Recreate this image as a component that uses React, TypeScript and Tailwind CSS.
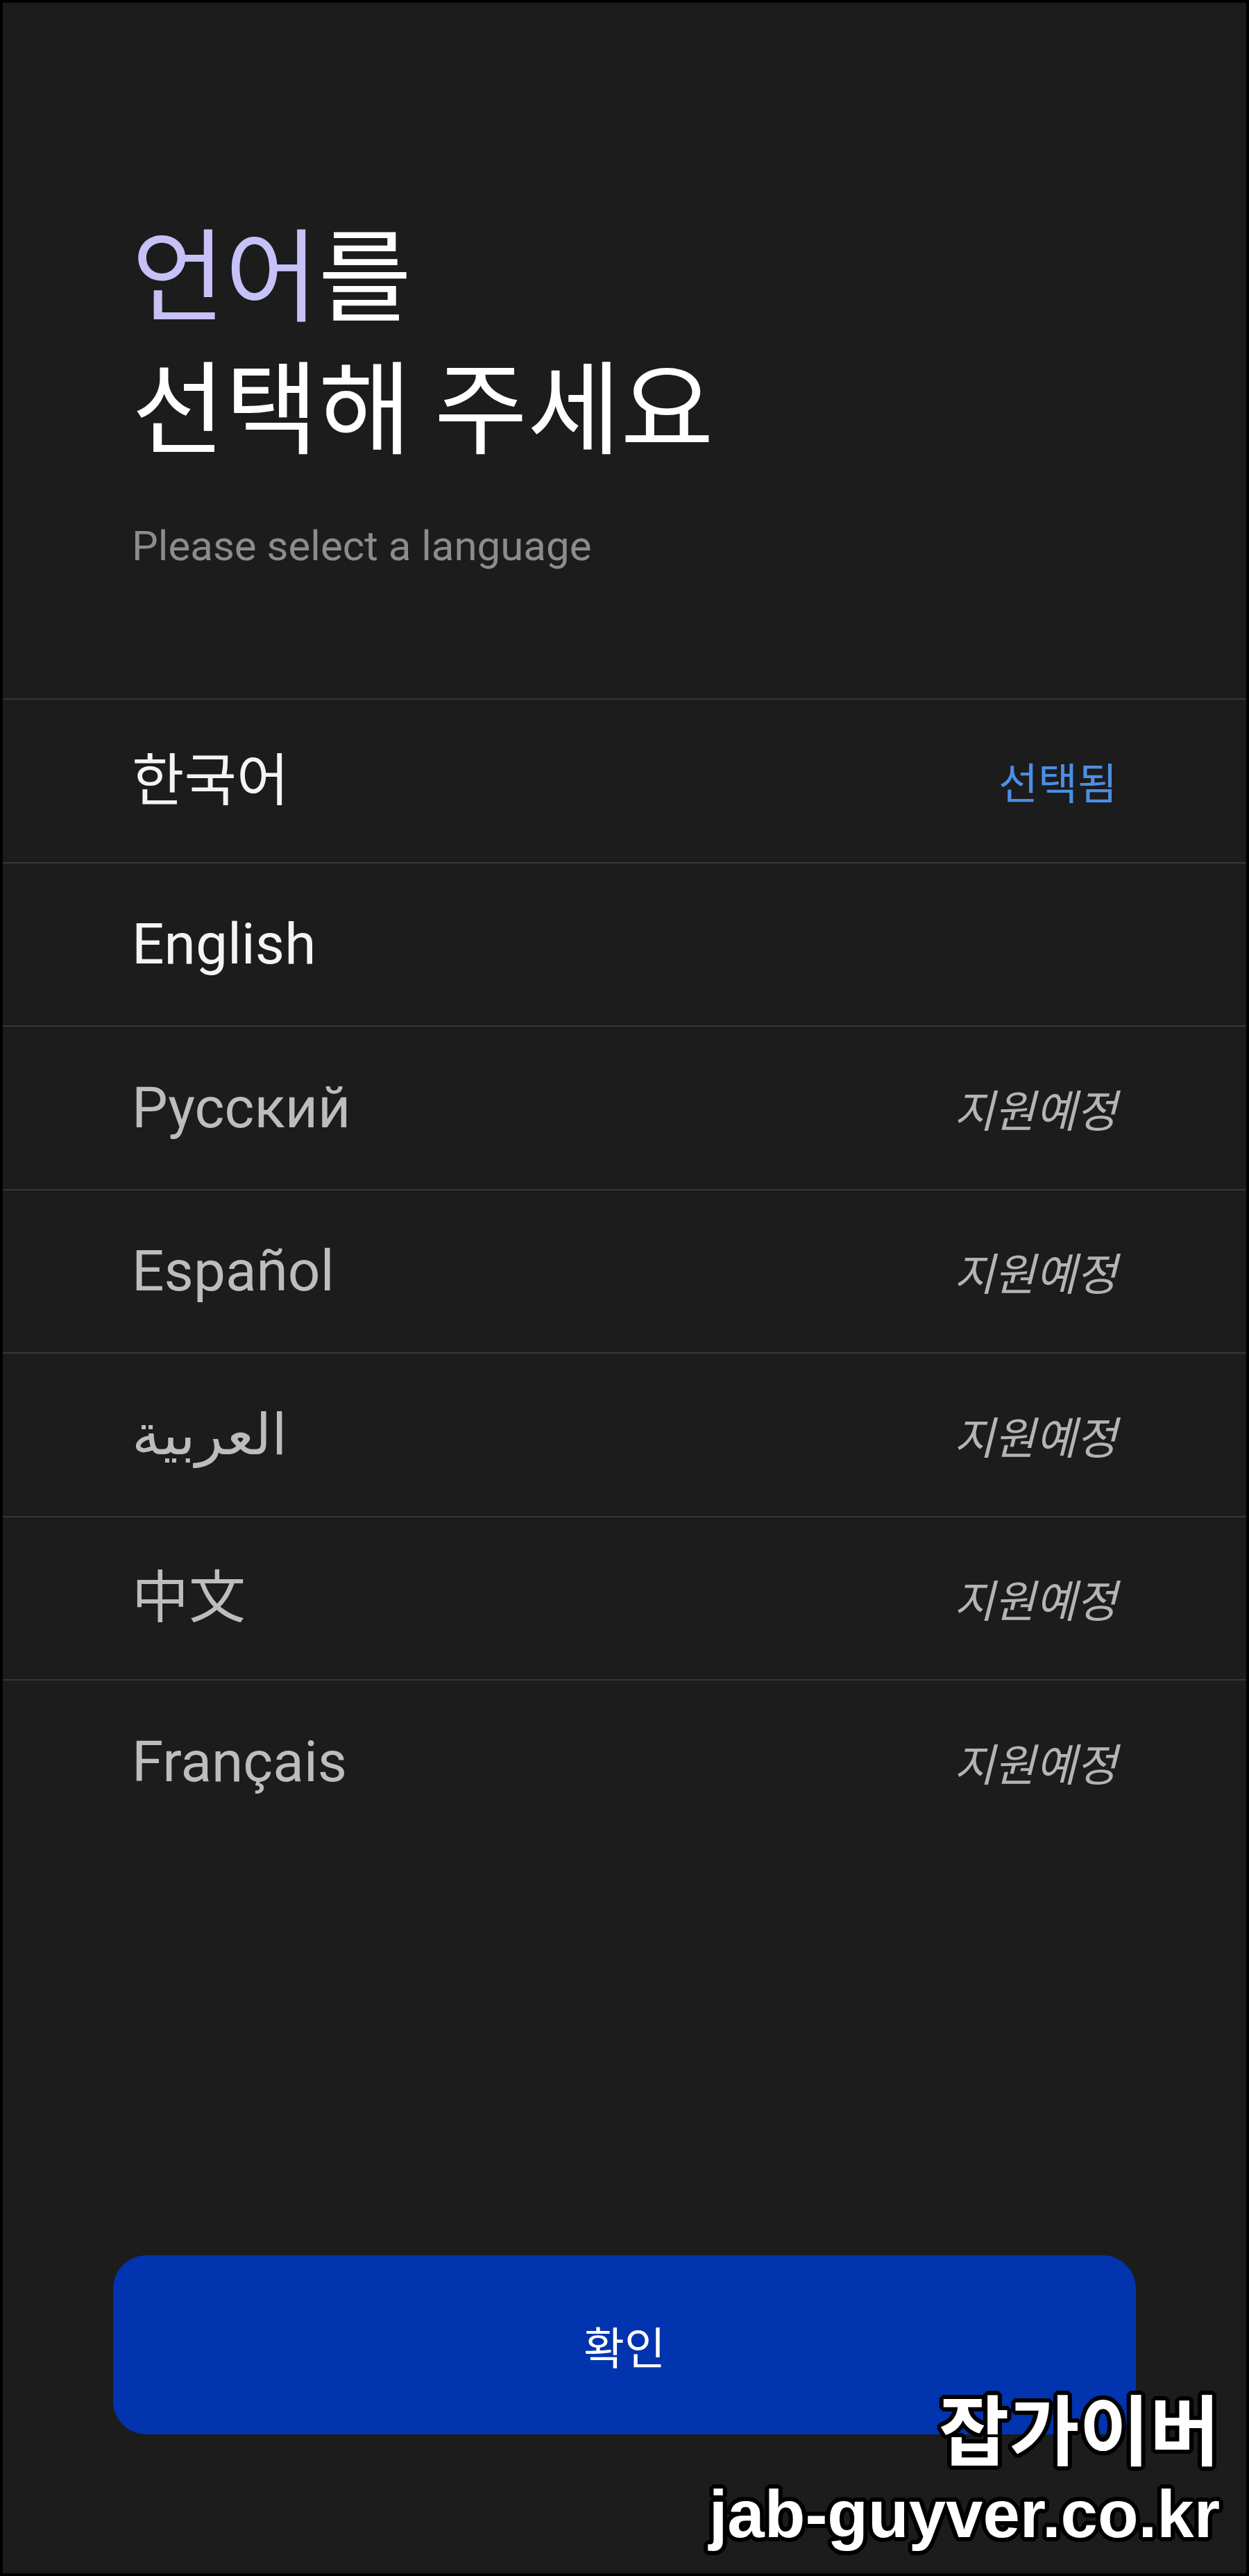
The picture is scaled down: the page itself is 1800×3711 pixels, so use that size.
import React, { useState } from 'react';

const SANS = "font-['Roboto','Noto_Sans_CJK_KR','DejaVu_Sans',sans-serif]";
const KR = "font-['Noto_Sans_CJK_KR',sans-serif]";

type Lang = { label: string; ready: boolean };

const LANGUAGES: Lang[] = [
  { label: '한국어', ready: true },
  { label: 'English', ready: true },
  { label: 'Русский', ready: false },
  { label: 'Español', ready: false },
  { label: 'العربية', ready: false },
  { label: '中文', ready: false },
  { label: 'Français', ready: false },
];

const OUTLINE =
  '[text-shadow:0_0_0_#000,5px_0_0_#000,-5px_0_0_#000,0_5px_0_#000,0_-5px_0_#000,4px_4px_0_#000,-4px_4px_0_#000,4px_-4px_0_#000,-4px_-4px_0_#000,6px_2px_0_#000,-6px_2px_0_#000,2px_6px_0_#000,-2px_6px_0_#000,6px_-2px_0_#000,-6px_-2px_0_#000,2px_-6px_0_#000,-2px_-6px_0_#000]';

export default function App() {
  const [selected, setSelected] = useState('한국어');

  return (
    <div className={`relative flex h-[3711px] w-[1800px] flex-col border-4 border-black bg-[#1c1c1c] ${SANS}`}>
      {/* Heading */}
      <div className="h-[1002px] shrink-0 pl-[186px] pt-[288px]">
        <h1 className={`text-[146px] leading-[191px] font-normal text-white ${KR}`}>
          <span className="text-[#c6c2f7]">언어</span>를
          <br />
          선택해 주세요
        </h1>
        <p className="mt-[78px] text-[60px] leading-[70px] text-[#8c8c8c] font-['Roboto',sans-serif]">
          Please select a language
        </p>
      </div>

      {/* Language list */}
      <ul className="shrink-0">
        {LANGUAGES.map((lang) => (
          <li
            key={lang.label}
            onClick={() => lang.ready && setSelected(lang.label)}
            className="flex h-[235.5px] items-center justify-between border-t-2 border-[#373737] px-[186px]"
          >
            <span
              className={`text-[82px] leading-none ${
                lang.ready ? 'text-[#f4f4f4]' : 'text-[#bdbdbd]'
              }`}
            >
              {lang.label}
            </span>
            {lang.label === selected && (
              <span className={`text-[62px] leading-none text-[#4b8fe4] ${KR}`}>선택됨</span>
            )}
            {!lang.ready && (
              <span className={`text-[64px] leading-none italic text-[#b4b4b4] ${KR}`}>지원예정</span>
            )}
          </li>
        ))}
      </ul>

      <div className="flex-1" />

      {/* Confirm button */}
      <button className="mx-[159px] mb-[200px] flex h-[258px] shrink-0 items-center justify-center rounded-[48px] bg-[#0134ae]">
        <span className={`text-[64px] leading-none text-white ${KR}`}>확인</span>
      </button>

      {/* Watermark */}
      <div className="pointer-events-none absolute bottom-[30px] right-[38px] flex flex-col items-end">
        <span className={`text-[110px] leading-[120px] font-bold text-white ${KR} ${OUTLINE}`}>
          잡가이버
        </span>
        <span
          className={`mt-[12px] text-[96px] leading-[110px] font-bold text-white font-['Liberation_Sans',sans-serif] ${OUTLINE}`}
        >
          jab-guyver.co.kr
        </span>
      </div>
    </div>
  );
}
